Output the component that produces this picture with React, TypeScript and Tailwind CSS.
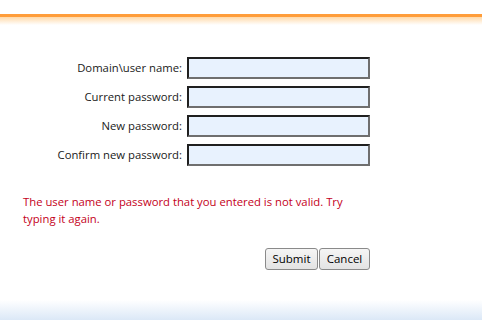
import React from 'react';

const rows = ['Domain\\user name:', 'Current password:', 'New password:', 'Confirm new password:'];

function Field() {
  return (
    <input
      type="text"
      className="h-[22px] w-[183px] border-2 border-t-[#1f1f1f] border-l-[#1f1f1f] border-r-[#6f6f6f] border-b-[#6f6f6f] bg-[#e8f2fe] outline-none"
    />
  );
}

function Button({ label }: { label: string }) {
  return (
    <button className="h-[22px] rounded-[3px] border border-[#8a8a8a] bg-gradient-to-b from-[#f5f5f5] to-[#e3e3e3] text-[11.5px] leading-none text-[#000]">
      {label}
    </button>
  );
}

export default function App() {
  return (
    <div className="flex h-[320px] w-[482px] flex-col bg-white font-['Open_Sans',sans-serif] text-[11.3px] text-[#1a1a1a]">
      <div className="mt-[14px] h-[3px] bg-[#ff9d3a]" />
      <div className="h-[8px] bg-gradient-to-b from-[#ffd9a8] to-white" />

      <div className="mt-[32px] grid grid-cols-[182px_183px] gap-x-[5px] gap-y-[7px]">
        {rows.map((label) => (
          <React.Fragment key={label}>
            <label className="self-center text-right leading-none">{label}</label>
            <Field />
          </React.Fragment>
        ))}
      </div>

      <p className="ml-[23px] mt-[27px] w-[335px] leading-[17px] text-[#c4001a]">
        The user name or password that you entered is not valid. Try typing it again.
      </p>

      <div className="ml-[265px] mt-[21px] grid w-[105px] grid-cols-[53px_51px] gap-[1px]">
        <Button label="Submit" />
        <Button label="Cancel" />
      </div>

      <div className="mt-auto h-[20px] bg-gradient-to-b from-white to-[#dbe8f7]" />
    </div>
  );
}
